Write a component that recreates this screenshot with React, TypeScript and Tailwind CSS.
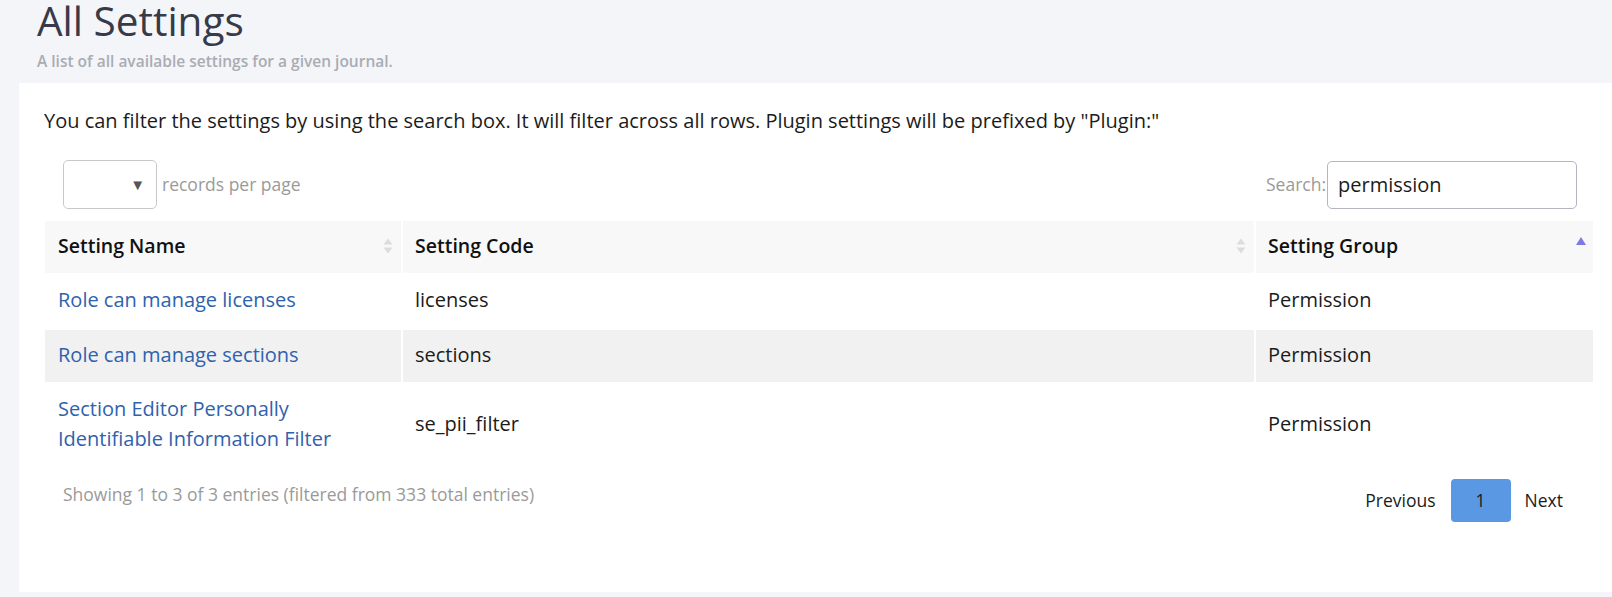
import React from "react";

interface SettingRow {
  name: string[];
  code: string;
  group: string;
}

const rows: SettingRow[] = [
  { name: ["Role can manage licenses"], code: "licenses", group: "Permission" },
  { name: ["Role can manage sections"], code: "sections", group: "Permission" },
  {
    name: ["Section Editor Personally", "Identifiable Information Filter"],
    code: "se_pii_filter",
    group: "Permission",
  },
];

const rowClasses = ["h-[57px] bg-white", "h-[52px] bg-[#f1f1f1]", "h-[83px] bg-white"];
const cellPad = ["pb-[4px]", "pb-[2px]", ""];

function SortBoth() {
  return (
    <svg width="10" height="16" viewBox="0 0 10 16" className="shrink-0">
      <path d="M5 0.5 L9.5 6.5 L0.5 6.5 Z" fill="#dcdcdc" />
      <path d="M0.5 9.5 L9.5 9.5 L5 15.5 Z" fill="#dcdcdc" />
    </svg>
  );
}

function SortAsc() {
  return (
    <svg width="10" height="8" viewBox="0 0 10 8" className="shrink-0 -mt-[10px]">
      <path d="M5 0 L10 8 L0 8 Z" fill="#7b7be3" />
    </svg>
  );
}

export default function App() {
  return (
    <div className="min-h-screen bg-[#f4f5f9] font-['Open_Sans',sans-serif]">
      <div className="pl-[37px]">
        <h1 className="text-[40.5px] leading-[42px] text-[#373b49]">All Settings</h1>
        <p className="mt-[9px] text-[15.5px] leading-[20px] font-semibold text-[#a9acb3]">
          A list of all available settings for a given journal.
        </p>
      </div>

      <div className="ml-[19px] mt-[12px] h-[509px] bg-white pl-[24px] pr-[17px] pt-[26px]">
        <p className="px-[1px] text-[20px] leading-[24px] text-[#1b1b1b]">
          You can filter the settings by using the search box. It will filter across all rows. Plugin
          settings will be prefixed by "Plugin:"
        </p>

        <div className="mt-[27px] flex h-[49px] items-center justify-between">
          <div className="ml-[20px] flex items-center">
            <div className="flex h-[49px] w-[94px] items-center justify-end rounded-[5px] border border-[#c9c9c9] pr-[11px]">
              <span className="text-[15px] leading-none text-[#555]">▼</span>
            </div>
            <span className="ml-[5px] text-[17.5px] text-[#9a9a9a]">records per page</span>
          </div>
          <div className="mr-[18px] flex items-center">
            <span className="text-[17.5px] text-[#9a9a9a]">Search:</span>
            <div className="ml-[1px] flex h-[48px] w-[250px] items-center rounded-[5px] border border-[#b3b6c2] pl-[10px] text-[20px] text-[#1b1b1b]">
              permission
            </div>
          </div>
        </div>

        <table className="mt-[12px] w-full table-fixed border-separate border-spacing-x-[2px] border-spacing-y-0 text-[20px]">
          <colgroup>
            <col className="w-[356px]" />
            <col />
            <col className="w-[337px]" />
          </colgroup>
          <thead>
            <tr className="h-[52px] bg-[#f8f8f8] text-[19.5px]">
              <th className="pb-[2px] pl-[13px] pr-[8px] text-left font-semibold text-[#111]">
                <div className="flex items-center justify-between">
                  <span>Setting Name</span>
                  <SortBoth />
                </div>
              </th>
              <th className="pb-[2px] pl-[12px] pr-[8px] text-left font-semibold text-[#111]">
                <div className="flex items-center justify-between">
                  <span>Setting Code</span>
                  <SortBoth />
                </div>
              </th>
              <th className="pb-[2px] pl-[12px] pr-[7px] text-left font-semibold text-[#111]">
                <div className="flex items-center justify-between">
                  <span>Setting Group</span>
                  <SortAsc />
                </div>
              </th>
            </tr>
          </thead>
          <tbody>
            {rows.map((row, i) => (
              <tr key={row.code} className={rowClasses[i]}>
                <td className={`pl-[13px] leading-[30px] text-[#2f62ad] ${cellPad[i]}`}>
                  {row.name.map((line) => (
                    <div key={line}>{line}</div>
                  ))}
                </td>
                <td className={`pl-[12px] leading-[30px] text-[#1b1b1b] ${cellPad[i]}`}>{row.code}</td>
                <td className={`pl-[12px] leading-[30px] text-[#1b1b1b] ${cellPad[i]}`}>{row.group}</td>
              </tr>
            ))}
          </tbody>
        </table>

        <div className="flex items-start justify-between">
          <p className="ml-[20px] mt-[17px] text-[17.5px] leading-[24px] text-[#9a9a9a]">
            Showing 1 to 3 of 3 entries (filtered from 333 total entries)
          </p>
          <div className="mr-[32px] mt-[14px] flex items-center text-[17.5px] text-[#1b1b1b]">
            <span className="mr-[15px]">Previous</span>
            <span className="flex h-[43px] w-[60px] items-center justify-center rounded-[4px] bg-[#5b98e4]">
              1
            </span>
            <span className="ml-[14px]">Next</span>
          </div>
        </div>
      </div>
    </div>
  );
}
